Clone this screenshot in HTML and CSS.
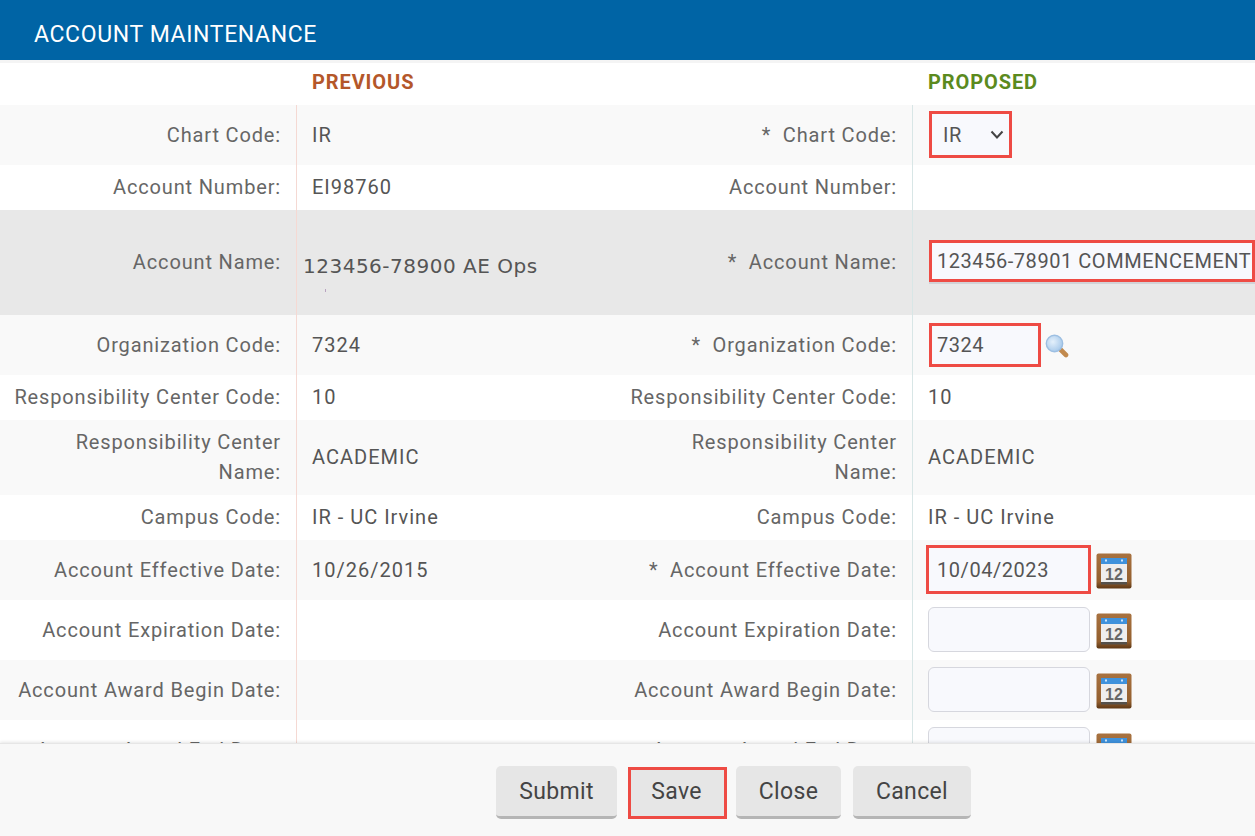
FILE: index.html
```html
<!DOCTYPE html>
<html lang="en">
<head>
<meta charset="utf-8">
<title>Account Maintenance</title>
<link rel="stylesheet" href="styles.css">
</head>
<body>
<svg class="defs" width="0" height="0" aria-hidden="true">
  <defs>
    <linearGradient id="wood" x1="0" y1="0" x2="0" y2="1">
      <stop offset="0" stop-color="#a87240"/>
      <stop offset="0.8" stop-color="#935f2e"/>
      <stop offset="1" stop-color="#5d3715"/>
    </linearGradient>
    <radialGradient id="glass" cx="0.4" cy="0.4" r="0.65">
      <stop offset="0" stop-color="#e4f0fb"/>
      <stop offset="1" stop-color="#a5c8ea"/>
    </radialGradient>
    <symbol id="cal" viewBox="0 0 36 36">
      <rect x="0.5" y="0.5" width="35" height="35" rx="2" fill="url(#wood)"/>
      <rect x="5" y="5" width="26" height="25" fill="#eeeeee"/>
      <rect x="5" y="29" width="26" height="2.5" fill="#55504a"/>
      <rect x="5" y="5" width="26" height="6" fill="#3f92dc"/>
      <rect x="9" y="6.5" width="2" height="2" fill="#cfe6fa"/>
      <rect x="25" y="6.5" width="2" height="2" fill="#cfe6fa"/>
      <text x="18" y="26.5" text-anchor="middle" class="cal-num">12</text>
    </symbol>
  </defs>
</svg>
<div class="page">
  <header class="title-bar">ACCOUNT MAINTENANCE</header>
  <main class="content">
    <div class="row head">
      <div class="cell"></div>
      <div class="cell head-cell prev">PREVIOUS</div>
      <div class="cell"></div>
      <div class="cell head-cell prop">PROPOSED</div>
    </div>

    <div class="row tall alt">
      <div class="cell label">Chart Code:</div>
      <div class="cell value left">IR</div>
      <div class="cell label">*&nbsp; Chart Code:</div>
      <div class="cell value right">
        <select class="field mark sel-chart"><option>IR</option></select>
      </div>
    </div>

    <div class="row">
      <div class="cell label">Account Number:</div>
      <div class="cell value left">EI98760</div>
      <div class="cell label">Account Number:</div>
      <div class="cell value right"></div>
    </div>

    <div class="row xl changed">
      <div class="cell label">Account Name:</div>
      <div class="cell value left old-name">
        <span class="old-name-text">123456-78900 AE Ops</span>
        <span class="speck"></span>
      </div>
      <div class="cell label">*&nbsp; Account Name:</div>
      <div class="cell value right">
        <input class="field mark in-name" value="123456-78901 COMMENCEMENT">
      </div>
    </div>

    <div class="row tall alt">
      <div class="cell label">Organization Code:</div>
      <div class="cell value left">7324</div>
      <div class="cell label">*&nbsp; Organization Code:</div>
      <div class="cell value right">
        <input class="field mark in-org" value="7324">
        <svg class="search" viewBox="0 0 24 24" aria-hidden="true">
          <path d="M14.5 14.5 L21 21" stroke="#c28a4e" stroke-width="4.6" stroke-linecap="round"/>
          <circle cx="9.5" cy="9.5" r="8.2" fill="url(#glass)" stroke="#9dbfe2" stroke-width="1.4"/>
        </svg>
      </div>
    </div>

    <div class="row">
      <div class="cell label">Responsibility Center Code:</div>
      <div class="cell value left">10</div>
      <div class="cell label">Responsibility Center Code:</div>
      <div class="cell value right">10</div>
    </div>

    <div class="row alt">
      <div class="cell label">Responsibility Center Name:</div>
      <div class="cell value left">ACADEMIC</div>
      <div class="cell label">Responsibility Center Name:</div>
      <div class="cell value right">ACADEMIC</div>
    </div>

    <div class="row">
      <div class="cell label">Campus Code:</div>
      <div class="cell value left">IR - UC Irvine</div>
      <div class="cell label">Campus Code:</div>
      <div class="cell value right">IR - UC Irvine</div>
    </div>

    <div class="row tall alt">
      <div class="cell label">Account Effective Date:</div>
      <div class="cell value left">10/26/2015</div>
      <div class="cell label">*&nbsp; Account Effective Date:</div>
      <div class="cell value right">
        <input class="field mark in-date" value="10/04/2023">
        <svg class="cal cal-marked" aria-hidden="true"><use href="#cal"/></svg>
      </div>
    </div>

    <div class="row tall">
      <div class="cell label">Account Expiration Date:</div>
      <div class="cell value left"></div>
      <div class="cell label">Account Expiration Date:</div>
      <div class="cell value right">
        <input class="field in-plain">
        <svg class="cal" aria-hidden="true"><use href="#cal"/></svg>
      </div>
    </div>

    <div class="row tall alt">
      <div class="cell label">Account Award Begin Date:</div>
      <div class="cell value left"></div>
      <div class="cell label">Account Award Begin Date:</div>
      <div class="cell value right">
        <input class="field in-plain">
        <svg class="cal" aria-hidden="true"><use href="#cal"/></svg>
      </div>
    </div>

    <div class="row tall">
      <div class="cell label">Account Award End Date:</div>
      <div class="cell value left"></div>
      <div class="cell label">Account Award End Date:</div>
      <div class="cell value right">
        <input class="field in-plain">
        <svg class="cal" aria-hidden="true"><use href="#cal"/></svg>
      </div>
    </div>
  </main>
  <footer class="actions">
    <button class="btn btn-submit">Submit</button>
    <button class="btn btn-save">Save</button>
    <button class="btn btn-close">Close</button>
    <button class="btn btn-cancel">Cancel</button>
  </footer>
</div>
</body>
</html>
```
FILE: styles.css
```css
* { box-sizing: border-box; }
html, body { margin: 0; height: 100%; }
body {
  font-family: Roboto, "Liberation Sans", sans-serif;
  font-size: 20px;
  letter-spacing: 0.85px;
  color: #555;
  background: #fff;
  overflow: hidden;
}
.defs { position: absolute; }
.cal-num { font: bold 16px "Liberation Sans", sans-serif; letter-spacing: 0; fill: #666; }

.page { display: flex; flex-direction: column; height: 100vh; }
.title-bar {
  flex: none;
  height: 60px;
  padding: 8px 0 0 34px;
  display: flex;
  align-items: center;
  background: #0064a5;
  color: #fff;
  font-size: 23px;
  letter-spacing: 0.63px;
}
.content { flex: 1; min-height: 0; overflow: hidden; }

.row {
  display: grid;
  grid-template-columns: 296px 320px 296px 343px;
  min-height: 45px;
  background: #fff;
}
.row.tall { min-height: 60px; }
.row.xl { min-height: 105px; }
.row.alt { background: #f9f9f9; }
.row.changed { background: #e8e8e8; }
.row.head { border-top: 3px solid #f4f4f4; }

.cell { display: flex; align-items: center; line-height: 30px; }
.label {
  justify-content: flex-end;
  text-align: right;
  padding: 7px 15px 8px 12px;
  color: #666;
}
.value { padding: 0 0 1px 15px; letter-spacing: 1px; }
.value.left { border-left: 1px solid #f5d9d3; }
.value.right { border-left: 1px solid #d8e6e6; }
.head-cell { padding: 0 0 4px 16px; font-weight: 700; letter-spacing: 0.9px; }
.prev { color: #b4572a; }
.prop { color: #5b8a1e; }

.old-name {
  flex-direction: column;
  align-items: flex-start;
  justify-content: center;
  padding-left: 6px;
  padding-top: 18px;
}
.old-name-text {
  font-family: "DejaVu Sans", sans-serif;
  font-size: 20px;
  letter-spacing: 0.5px;
}
.speck { width: 1px; height: 3px; margin: 8px 0 0 22px; background: #b9a3c0; }

.field {
  font-family: inherit;
  font-size: 20px;
  letter-spacing: 0.55px;
  color: #555;
  background: #f8f9fd;
  border: 1px solid #d6d7de;
  border-radius: 6px;
  outline: none;
}
.mark { border: 3px solid #ee4b44; border-radius: 0; }
.sel-chart {
  appearance: none;
  width: 83px;
  height: 47px;
  margin-left: 1px;
  padding-left: 11px;
  background: #f8f9fd url("data:image/svg+xml,%3Csvg xmlns='http://www.w3.org/2000/svg' width='14' height='10'%3E%3Cpath d='M1.5 1.5 L7 7.5 L12.5 1.5' fill='none' stroke='%23444' stroke-width='2'/%3E%3C/svg%3E") no-repeat 58px 16px;
}
.in-name {
  width: 326px;
  height: 42px;
  margin: 0 0 3px 1px;
  padding: 0 0 0 5px;
  box-shadow: 0 2px 0 #d2d2d6;
}
.in-org { width: 112px; height: 44px; margin-left: 1px; padding: 0 5px; }
.in-date { width: 165px; height: 49px; margin-left: -2px; padding: 0 8px; }
.in-plain { width: 162px; height: 45px; }
.search { width: 24px; height: 24px; margin-left: 4px; margin-top: 3px; }
.cal { width: 36px; height: 36px; margin: 3px 0 0 6px; }
.cal-marked { margin-left: 5px; }

.actions {
  flex: none;
  height: 93px;
  padding: 22px 0 0 496px;
  display: flex;
  align-items: flex-start;
  background: #f8f8f8;
  border-top: 1px solid #e6e6e6;
  box-shadow: 0 -1px 3px rgba(0, 0, 0, 0.1);
  position: relative;
}
.btn {
  height: 53px;
  padding: 0;
  font-family: inherit;
  font-size: 23px;
  letter-spacing: 0.35px;
  color: #444;
  background: #e6e6e6;
  border: none;
  border-bottom: 3px solid #b5b5b5;
  border-radius: 5px;
}
.btn-submit { width: 121px; }
.btn-save {
  width: 99px;
  height: 52px;
  margin: 1px 0 0 11px;
  padding: 0 2px 4px 0;
  border: 3px solid #ee4b44;
  border-radius: 0;
}
.btn-close { width: 105px; margin-left: 9px; }
.btn-cancel { width: 118px; margin-left: 12px; }
```
